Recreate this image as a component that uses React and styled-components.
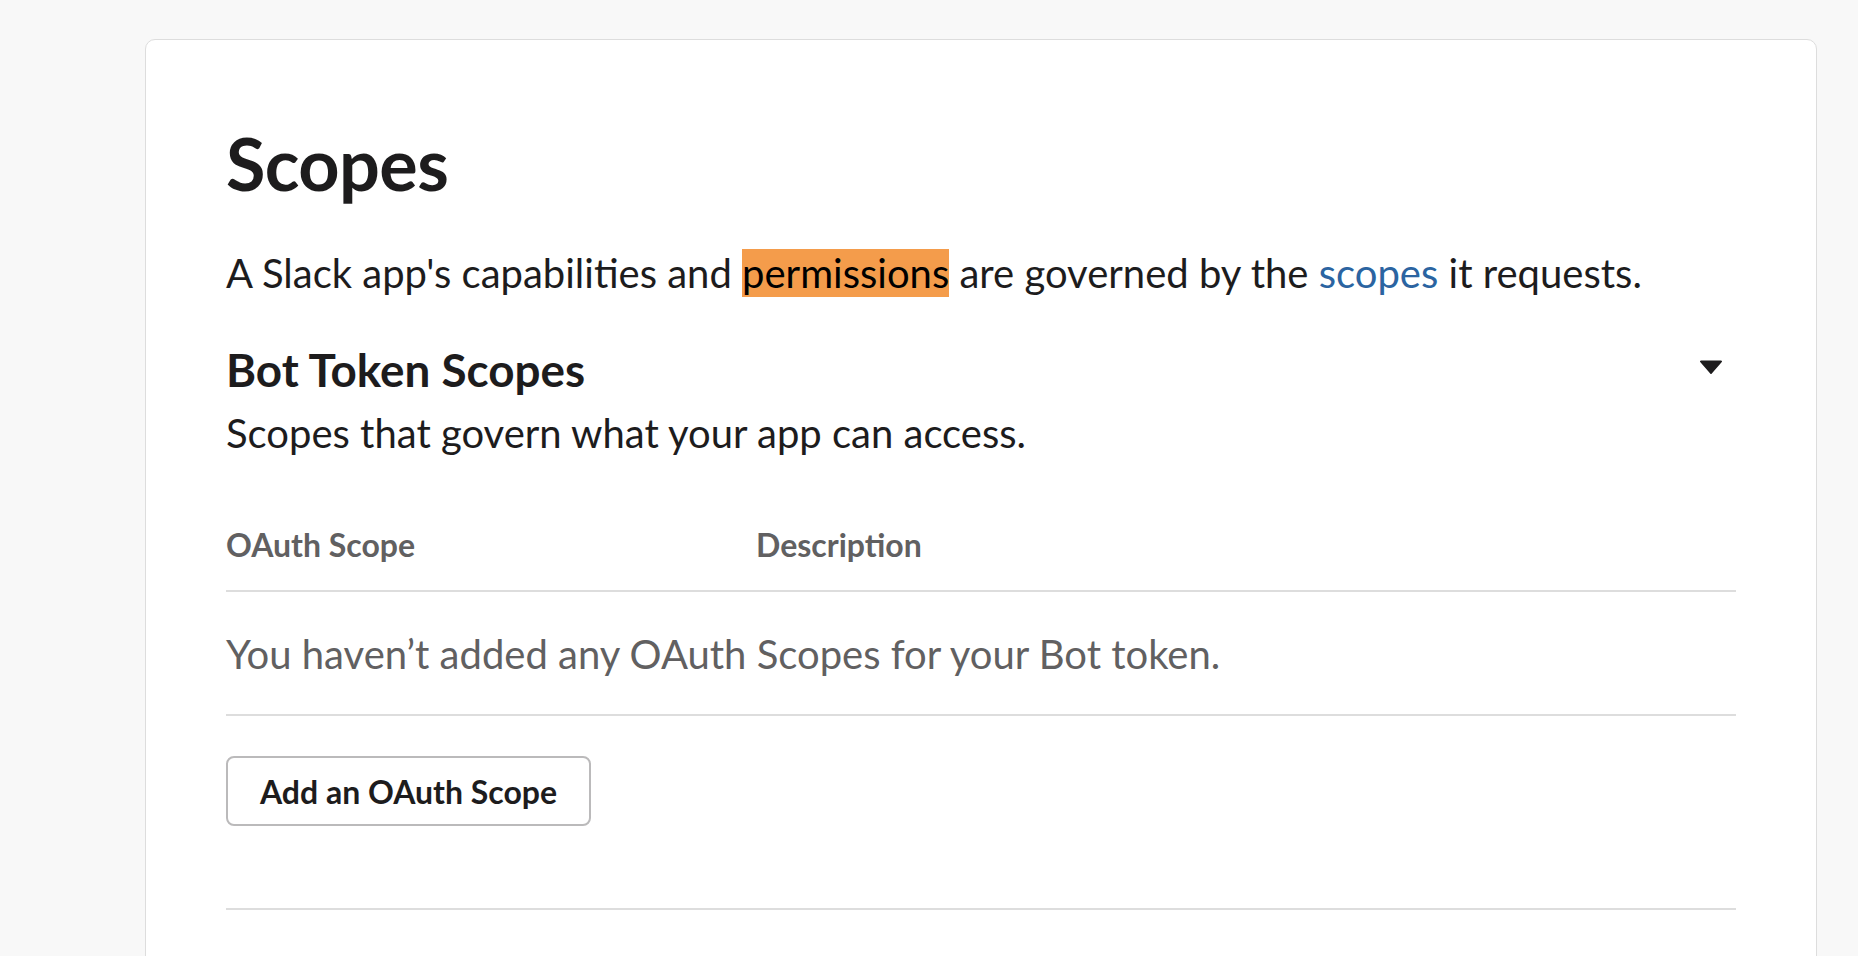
import React from "react";
import styled, { createGlobalStyle } from "styled-components";

const Global = createGlobalStyle`
  html, body { margin: 0; padding: 0; background: #f8f8f8; }
  body { font-family: Lato, "Noto Sans", sans-serif; color: #1d1c1d; }
  * { box-sizing: border-box; }
`;

const Page = styled.div`
  height: 956px;
  padding: 39px 41px 0 145px;
  overflow: hidden;
`;

const Card = styled.section`
  background: #fff;
  border: 1px solid #dddddd;
  border-radius: 10px;
  padding: 78px 80px 120px 80px;
  min-height: 1100px;
`;

const Title = styled.h1`
  margin: 0;
  font-size: 72px;
  line-height: 90px;
  font-weight: 700;
  color: #1d1c1d;
  letter-spacing: -0.6px;
`;

const Lead = styled.p`
  margin: 38px 0 0;
  font-size: 40px;
  line-height: 54px;
  color: #1d1c1d;
`;

const Highlight = styled.mark`
  background: #f49c4b;
  color: #000;
  padding: 0;
`;

const Link = styled.a`
  color: #2b64a1;
  text-decoration: none;
`;

const SectionHead = styled.div`
  margin-top: 41px;
  display: flex;
  align-items: flex-start;
  justify-content: space-between;
`;

const SectionTitle = styled.h2`
  margin: 0;
  font-size: 45.8px;
  line-height: 57px;
  font-weight: 700;
  color: #1d1c1d;
`;

const Caret = styled.button`
  border: 0;
  background: none;
  padding: 0;
  margin: 18px 13px 0 0;
  width: 24px;
  height: 16px;
  display: flex;
  cursor: pointer;
`;

const Sub = styled.p`
  margin: 8px 0 0;
  font-size: 40px;
  line-height: 54px;
  color: #1d1c1d;
`;

const Table = styled.div`
  margin-top: 61px;
`;

const HeaderRow = styled.div`
  display: grid;
  grid-template-columns: 530px 1fr;
  padding-bottom: 21px;
  border-bottom: 2px solid #dddddd;
`;

const HeaderCell = styled.div`
  font-size: 32px;
  line-height: 48px;
  font-weight: 700;
  color: #616061;
`;

const EmptyRow = styled.div`
  padding: 35px 0 33px;
  border-bottom: 2px solid #dddddd;
  font-size: 40px;
  line-height: 54px;
  color: #616061;
`;

const Button = styled.button`
  margin-top: 40px;
  height: 70px;
  width: 365px;
  border: 2px solid #bbbabb;
  border-radius: 8px;
  background: #fff;
  font-family: Lato, "Noto Sans", sans-serif;
  font-size: 32px;
  font-weight: 700;
  color: #1d1c1d;
  padding: 0 20px;
  cursor: pointer;
`;

const Rule = styled.hr`
  margin: 82px 0 0;
  border: 0;
  border-top: 2px solid #dddddd;
`;

export default function App() {
  return (
    <>
      <Global />
      <Page>
        <Card>
          <Title>Scopes</Title>
          <Lead>
            A Slack app's capabilities and <Highlight>permissions</Highlight> are governed by the{" "}
            <Link href="#">scopes</Link> it requests.
          </Lead>
          <SectionHead>
            <SectionTitle>Bot Token Scopes</SectionTitle>
            <Caret aria-label="Collapse">
              <svg width="24" height="16" viewBox="0 0 24 16">
                <path d="M2 1.5 H22 a1 1 0 0 1 0.8 1.6 L12.8 14.4 a1 1 0 0 1 -1.6 0 L1.2 3.1 A1 1 0 0 1 2 1.5 Z" fill="#1d1c1d" />
              </svg>
            </Caret>
          </SectionHead>
          <Sub>Scopes that govern what your app can access.</Sub>
          <Table>
            <HeaderRow>
              <HeaderCell>OAuth Scope</HeaderCell>
              <HeaderCell>Description</HeaderCell>
            </HeaderRow>
            <EmptyRow>You haven’t added any OAuth Scopes for your Bot token.</EmptyRow>
          </Table>
          <Button>Add an OAuth Scope</Button>
          <Rule />
        </Card>
      </Page>
    </>
  );
}
